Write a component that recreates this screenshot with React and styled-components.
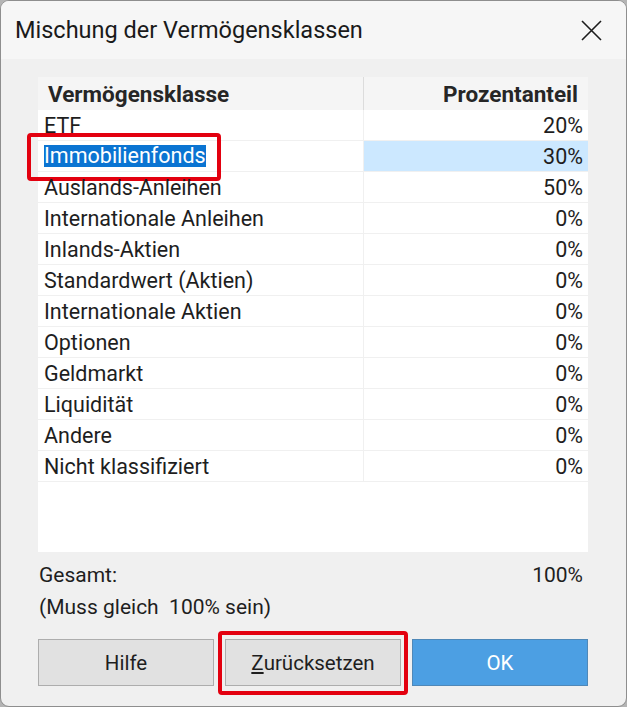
import React from 'react';
import styled, { createGlobalStyle } from 'styled-components';

const GlobalStyle = createGlobalStyle`
  html, body {
    margin: 0;
    padding: 0;
    background: #b4b4b4;
  }
  body {
    font-family: Roboto, "Noto Sans", sans-serif;
    color: #1c1c1c;
  }
`;

const classes = [
  { name: 'ETF', share: 20 },
  { name: 'Immobilienfonds', share: 30, selected: true },
  { name: 'Auslands-Anleihen', share: 50 },
  { name: 'Internationale Anleihen', share: 0 },
  { name: 'Inlands-Aktien', share: 0 },
  { name: 'Standardwert (Aktien)', share: 0 },
  { name: 'Internationale Aktien', share: 0 },
  { name: 'Optionen', share: 0 },
  { name: 'Geldmarkt', share: 0 },
  { name: 'Liquidität', share: 0 },
  { name: 'Andere', share: 0 },
  { name: 'Nicht klassifiziert', share: 0 },
];

const App = () => {
  const total = classes.reduce((sum, c) => sum + c.share, 0);

  return (
    <>
      <GlobalStyle />
      <Dialog>
        <TitleBar>
          <Title>Mischung der Vermögensklassen</Title>
          <CloseButton aria-label="Schließen">
            <svg width="21" height="21" viewBox="0 0 21 21">
              <path d="M1 1 L20 20 M20 1 L1 20" stroke="#1c1c1c" strokeWidth="1.6" />
            </svg>
          </CloseButton>
        </TitleBar>

        <Body>
          <Table>
            <HeaderRow>
              <HeaderCell>Vermögensklasse</HeaderCell>
              <HeaderCell $right>Prozentanteil</HeaderCell>
            </HeaderRow>
            {classes.map((c) => (
              <Row key={c.name}>
                <NameCell>
                  {c.selected ? (
                    <>
                      <SelectedText>{c.name}</SelectedText>
                      <Marker />
                    </>
                  ) : (
                    c.name
                  )}
                </NameCell>
                <ValueCell $selected={c.selected}>{c.share}%</ValueCell>
              </Row>
            ))}
          </Table>

          <Summary>
            <SummaryLine>
              <span>Gesamt:</span>
              <span>{total}%</span>
            </SummaryLine>
            <SummaryLine>(Muss gleich&nbsp; 100% sein)</SummaryLine>
          </Summary>

          <ButtonRow>
            <Button>Hilfe</Button>
            <MarkedButtonWrap>
              <Button>
                <u>Z</u>urücksetzen
              </Button>
              <ButtonMarker />
            </MarkedButtonWrap>
            <Button $primary>OK</Button>
          </ButtonRow>
        </Body>
      </Dialog>
    </>
  );
};

const Dialog = styled.div`
  box-sizing: border-box;
  width: 627px;
  height: 707px;
  background: #f0f0f0;
  border: 1px solid #8e8e8e;
  border-radius: 9px;
  overflow: hidden;
  display: flex;
  flex-direction: column;
`;

const TitleBar = styled.div`
  height: 58px;
  display: flex;
  align-items: center;
  justify-content: space-between;
  padding: 0 24px 0 14px;
  background: #f6f6f6;
`;

const Title = styled.div`
  font-size: 23.5px;
  color: #1a1a1a;
`;

const CloseButton = styled.div`
  width: 22px;
  height: 22px;
  display: flex;
  align-items: center;
  justify-content: center;
`;

const Body = styled.div`
  padding: 18px 38px 0 37px;
  display: flex;
  flex-direction: column;
`;

const Table = styled.div`
  height: 475px;
  background: #ffffff;
  display: flex;
  flex-direction: column;
`;

const HeaderRow = styled.div`
  display: grid;
  grid-template-columns: 325px 1fr;
  height: 33px;
  background: #f5f5f5;
`;

const HeaderCell = styled.div`
  display: flex;
  align-items: center;
  justify-content: ${(p) => (p.$right ? 'flex-end' : 'flex-start')};
  padding: ${(p) => (p.$right ? '0 10px 0 0' : '0 0 0 10px')};
  font-size: 22.5px;
  font-weight: 700;
  color: #262626;
  border-left: ${(p) => (p.$right ? '1px solid #dcdcdc' : 'none')};
`;

const Row = styled.div`
  display: grid;
  grid-template-columns: 325px 1fr;
  height: 31px;
  border-bottom: 1px solid #f0f0f0;
  box-sizing: border-box;
`;

const NameCell = styled.div`
  position: relative;
  display: flex;
  align-items: center;
  padding-left: 6px;
  font-size: 21.5px;
  color: #1e1e1e;
`;

const ValueCell = styled.div`
  display: flex;
  align-items: center;
  justify-content: flex-end;
  padding-right: 5px;
  font-size: 21.5px;
  color: #1e1e1e;
  border-left: 1px solid #f0f0f0;
  background: ${(p) => (p.$selected ? '#cce8ff' : 'transparent')};
`;

const SelectedText = styled.span`
  background: #0a74d2;
  color: #ffffff;
  line-height: 22px;
`;

const Marker = styled.div`
  position: absolute;
  left: -11px;
  top: -8px;
  width: 194px;
  height: 48px;
  box-sizing: border-box;
  border: 4px solid #e3000f;
  border-radius: 4px;
  pointer-events: none;
`;

const Summary = styled.div`
  padding: 7px 5px 0 1px;
  display: flex;
  flex-direction: column;
`;

const SummaryLine = styled.div`
  height: 32px;
  display: flex;
  align-items: center;
  justify-content: space-between;
  font-size: 21px;
  color: #1e1e1e;
`;

const ButtonRow = styled.div`
  margin-top: 16px;
  display: grid;
  grid-template-columns: 176px 176px 176px;
  gap: 11px;
`;

const MarkedButtonWrap = styled.div`
  position: relative;
  display: flex;
`;

const Button = styled.div`
  flex: 1;
  height: 47px;
  box-sizing: border-box;
  display: flex;
  align-items: center;
  justify-content: center;
  font-size: 20.5px;
  background: ${(p) => (p.$primary ? '#4c9fe3' : '#e1e1e1')};
  color: ${(p) => (p.$primary ? '#ffffff' : '#1e1e1e')};
  border: 1px solid ${(p) => (p.$primary ? '#4f88b8' : '#adadad')};
`;

const ButtonMarker = styled.div`
  position: absolute;
  left: -7px;
  top: -8px;
  right: -7px;
  bottom: -9px;
  border: 4px solid #e3000f;
  border-radius: 4px;
  pointer-events: none;
`;

export default App;
